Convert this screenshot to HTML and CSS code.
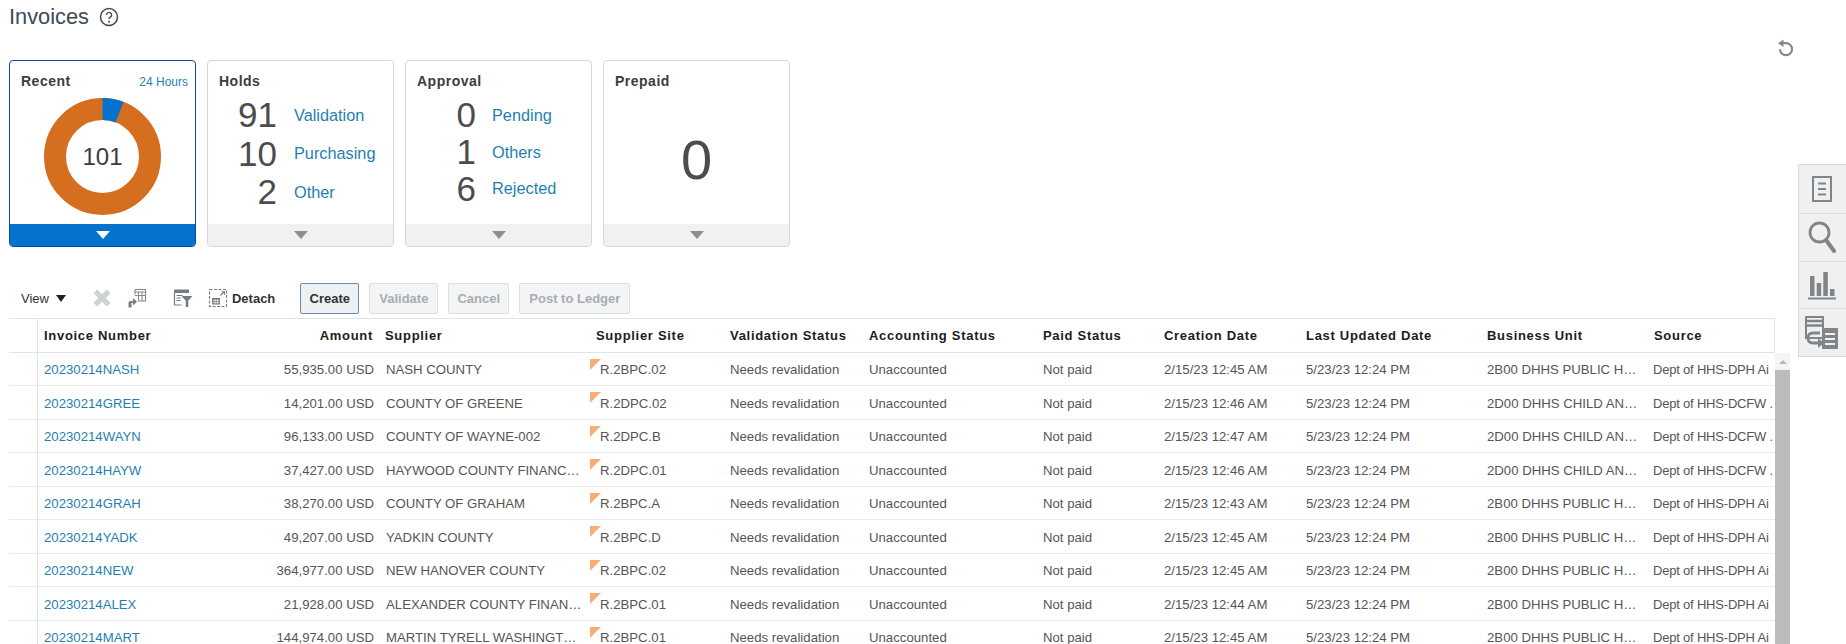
FILE: index.html
```html
<!DOCTYPE html>
<html lang="en">
<head>
<meta charset="utf-8">
<title>Invoices</title>
<link rel="stylesheet" href="styles.css">
</head>
<body>
<div class="page">
  <header class="title-row">
    <h1 class="title">Invoices</h1>
    <svg class="help" viewBox="0 0 20 20"><circle cx="10" cy="10" r="8.500" fill="none" stroke="#3f4952" stroke-width="1.500"/><path d="M7.400 8a2.600 2.600 0 1 1 4 2.200c-.9.6-1.400 1-1.400 2.100" fill="none" stroke="#3f4952" stroke-width="1.400"/><circle cx="10" cy="14.800" r="1" fill="#3f4952"/></svg>
  </header>

  <section class="cards">
    <article class="card card-active">
      <div class="card-body">
        <div class="card-head"><span class="card-title">Recent</span><a class="hours">24 Hours</a></div>
        <div class="donut">
          <svg viewBox="0 0 117 117" class="donut-svg">
            <circle cx="58.500" cy="58.500" r="47.500" fill="none" stroke="#d56e1f" stroke-width="22"/>
            <path d="M58.500 0A58.500 58.500 0 0 1 79.500 3.900L71.600 24.400A36.500 36.500 0 0 0 58.500 22Z" fill="#0572ce"/>
          </svg>
          <span class="donut-num">101</span>
        </div>
      </div>
      <div class="card-foot"><span class="caret"></span></div>
    </article>

    <article class="card">
      <div class="card-body">
        <div class="card-head"><span class="card-title">Holds</span></div>
        <div class="stats stats-holds">
          <span class="stat-num">91</span><a class="stat-link">Validation</a>
          <span class="stat-num">10</span><a class="stat-link">Purchasing</a>
          <span class="stat-num">2</span><a class="stat-link">Other</a>
        </div>
      </div>
      <div class="card-foot"><span class="caret"></span></div>
    </article>

    <article class="card">
      <div class="card-body">
        <div class="card-head"><span class="card-title">Approval</span></div>
        <div class="stats stats-approval">
          <span class="stat-num">0</span><a class="stat-link">Pending</a>
          <span class="stat-num">1</span><a class="stat-link">Others</a>
          <span class="stat-num">6</span><a class="stat-link">Rejected</a>
        </div>
      </div>
      <div class="card-foot"><span class="caret"></span></div>
    </article>

    <article class="card">
      <div class="card-body">
        <div class="card-head"><span class="card-title">Prepaid</span></div>
        <div class="big-num">0</div>
      </div>
      <div class="card-foot"><span class="caret"></span></div>
    </article>
  </section>

  <div class="toolbar">
    <span class="view">View</span><span class="view-caret"></span>
    <svg class="tool tool-x" viewBox="0 0 18 18"><path d="M3 3l12 12M15 3L3 15" stroke="#cfd2d4" stroke-width="4.800" fill="none"/></svg>
    <svg class="tool tool-freeze" viewBox="0 0 20 20"><path d="M8 1.500h10.500v11.500h-7.500M8 1.500v5M8 4h10.500M8 7.500h10.500M11.500 4v9M15 4v9" fill="none" stroke="#85898d" stroke-width="1.100"/><path d="M1.500 19.500v-4.500q0-2 2-2h2.500V10l4 3.700-4 3.700v-2.600H4.500v4.700z" fill="#777c80"/></svg>
    <svg class="tool tool-filter" viewBox="0 0 20 20"><path d="M1 1.500h15v3.500H1z" fill="#777c80"/><path d="M1.500 5v12h7" fill="none" stroke="#777c80" stroke-width="1.200"/><path d="M3.500 7.500h6M3.500 10h4.500M3.500 12.500h4" stroke="#777c80" stroke-width="1.200"/><path d="M8.500 8h11l-4.200 4.800v6.200h-2.600v-6.200z" fill="#777c80"/></svg>
    <svg class="tool tool-detach" viewBox="0 0 20 20"><path d="M1.500 1.500h17v17h-17z" fill="none" stroke="#777c80" stroke-width="1.100" stroke-dasharray="3 1.500"/><rect x="4" y="10" width="8" height="6.500" fill="#777c80"/><path d="M4.500 12.500h7M4.500 14.500h7M7 11v5M9.500 11v5" stroke="#fff" stroke-width=".6"/><path d="M12.500 7.500l3.500-3.500M13.500 3.800h3v3" fill="none" stroke="#777c80" stroke-width="1.100"/></svg>
    <span class="detach">Detach</span>
    <button class="btn btn-primary">Create</button>
    <button class="btn btn-off btn-validate">Validate</button>
    <button class="btn btn-off btn-cancel">Cancel</button>
    <button class="btn btn-off btn-post">Post to Ledger</button>
  </div>

  <div class="grid-wrap">
    <table class="grid">
      <colgroup>
        <col class="c0"><col class="c1"><col class="c2"><col class="c3"><col class="c4"><col class="c5"><col class="c6"><col class="c7"><col class="c8"><col class="c9"><col class="c10"><col class="c11">
      </colgroup>
      <thead>
        <tr>
          <th class="gutter"></th><th>Invoice Number</th><th class="num">Amount</th><th>Supplier</th><th>Supplier Site</th><th>Validation Status</th><th>Accounting Status</th><th>Paid Status</th><th>Creation Date</th><th>Last Updated Date</th><th>Business Unit</th><th>Source</th>
        </tr>
      </thead>
      <tbody>
        <tr><td class="gutter"></td><td><a>20230214NASH</a></td><td class="num">55,935.00 USD</td><td class="sup">NASH COUNTY</td><td class="site">R.2BPC.02</td><td>Needs revalidation</td><td>Unaccounted</td><td>Not paid</td><td>2/15/23 12:45 AM</td><td>5/23/23 12:24 PM</td><td>2B00 DHHS PUBLIC H…</td><td class="src">Dept of HHS-DPH Ai</td></tr>
        <tr><td class="gutter"></td><td><a>20230214GREE</a></td><td class="num">14,201.00 USD</td><td class="sup">COUNTY OF GREENE</td><td class="site">R.2DPC.02</td><td>Needs revalidation</td><td>Unaccounted</td><td>Not paid</td><td>2/15/23 12:46 AM</td><td>5/23/23 12:24 PM</td><td>2D00 DHHS CHILD AN…</td><td class="src">Dept of HHS-DCFW .</td></tr>
        <tr><td class="gutter"></td><td><a>20230214WAYN</a></td><td class="num">96,133.00 USD</td><td class="sup">COUNTY OF WAYNE-002</td><td class="site">R.2DPC.B</td><td>Needs revalidation</td><td>Unaccounted</td><td>Not paid</td><td>2/15/23 12:47 AM</td><td>5/23/23 12:24 PM</td><td>2D00 DHHS CHILD AN…</td><td class="src">Dept of HHS-DCFW .</td></tr>
        <tr><td class="gutter"></td><td><a>20230214HAYW</a></td><td class="num">37,427.00 USD</td><td class="sup">HAYWOOD COUNTY FINANC…</td><td class="site">R.2DPC.01</td><td>Needs revalidation</td><td>Unaccounted</td><td>Not paid</td><td>2/15/23 12:46 AM</td><td>5/23/23 12:24 PM</td><td>2D00 DHHS CHILD AN…</td><td class="src">Dept of HHS-DCFW .</td></tr>
        <tr><td class="gutter"></td><td><a>20230214GRAH</a></td><td class="num">38,270.00 USD</td><td class="sup">COUNTY OF GRAHAM</td><td class="site">R.2BPC.A</td><td>Needs revalidation</td><td>Unaccounted</td><td>Not paid</td><td>2/15/23 12:43 AM</td><td>5/23/23 12:24 PM</td><td>2B00 DHHS PUBLIC H…</td><td class="src">Dept of HHS-DPH Ai</td></tr>
        <tr><td class="gutter"></td><td><a>20230214YADK</a></td><td class="num">49,207.00 USD</td><td class="sup">YADKIN COUNTY</td><td class="site">R.2BPC.D</td><td>Needs revalidation</td><td>Unaccounted</td><td>Not paid</td><td>2/15/23 12:45 AM</td><td>5/23/23 12:24 PM</td><td>2B00 DHHS PUBLIC H…</td><td class="src">Dept of HHS-DPH Ai</td></tr>
        <tr><td class="gutter"></td><td><a>20230214NEW</a></td><td class="num">364,977.00 USD</td><td class="sup">NEW HANOVER COUNTY</td><td class="site">R.2BPC.02</td><td>Needs revalidation</td><td>Unaccounted</td><td>Not paid</td><td>2/15/23 12:45 AM</td><td>5/23/23 12:24 PM</td><td>2B00 DHHS PUBLIC H…</td><td class="src">Dept of HHS-DPH Ai</td></tr>
        <tr><td class="gutter"></td><td><a>20230214ALEX</a></td><td class="num">21,928.00 USD</td><td class="sup">ALEXANDER COUNTY FINAN…</td><td class="site">R.2BPC.01</td><td>Needs revalidation</td><td>Unaccounted</td><td>Not paid</td><td>2/15/23 12:44 AM</td><td>5/23/23 12:24 PM</td><td>2B00 DHHS PUBLIC H…</td><td class="src">Dept of HHS-DPH Ai</td></tr>
        <tr><td class="gutter"></td><td><a>20230214MART</a></td><td class="num">144,974.00 USD</td><td class="sup">MARTIN TYRELL WASHINGT…</td><td class="site">R.2BPC.01</td><td>Needs revalidation</td><td>Unaccounted</td><td>Not paid</td><td>2/15/23 12:45 AM</td><td>5/23/23 12:24 PM</td><td>2B00 DHHS PUBLIC H…</td><td class="src">Dept of HHS-DPH Ai</td></tr>
      </tbody>
    </table>
    <div class="scrollbar"><span class="scroll-up"></span><span class="scroll-thumb"></span></div>
  </div>
</div>

<svg class="refresh" viewBox="0 0 18 18"><path d="M6 4.200h3a6 6 0 1 1-6 6" fill="none" stroke="#85898d" stroke-width="2.200"/><path d="M1 4.200L6.500 .5v7.400z" fill="#85898d"/></svg>

<nav class="side-tabs">
  <div class="side-tab"><svg viewBox="0 0 20 26" class="side-icon"><path d="M1 1h18v24H1z" fill="none" stroke="#808589" stroke-width="2"/><path d="M6 7.500h8M6 13h8M6 18.500h8" stroke="#808589" stroke-width="2"/></svg></div>
  <div class="side-tab"><svg viewBox="0 0 28 32" class="side-icon side-search"><circle cx="11.500" cy="11.500" r="9.500" fill="none" stroke="#808589" stroke-width="2.800"/><path d="M18 19l8 11" stroke="#808589" stroke-width="4" stroke-linecap="round"/></svg></div>
  <div class="side-tab"><svg viewBox="0 0 30 30" class="side-icon side-chart"><path d="M3 6h4.500v20H3zM9.700 13h4.500v13H9.700zM16.300 2h4.500v24h-4.500zM23 19h4.500v7H23z" fill="#808589"/><path d="M1 28.500h28" stroke="#808589" stroke-width="2"/></svg></div>
  <div class="side-tab"><svg viewBox="0 0 34 34" class="side-icon side-cmp"><path d="M1 1h17v21H1z" fill="#f0f0f0" stroke="#808589" stroke-width="2"/><path d="M1 5h17M1 9.500h17" stroke="#808589" stroke-width="2.600"/><path d="M17 12h16v21H17z" fill="#808589"/><path d="M20 18h10M20 23h10M20 28h10" stroke="#f0f0f0" stroke-width="1.800"/><path d="M15 17H8q-5 0-5 5t5 5h6" fill="none" stroke="#808589" stroke-width="2.800"/><path d="M13 22l6 5-6 5z" fill="#808589"/></svg></div>
</nav>
</body>
</html>
```
FILE: styles.css
```css
* { box-sizing: border-box; }
html, body { margin: 0; padding: 0; height: 644px; overflow: hidden; background: #fff; }
body { position: relative; font-family: "Liberation Sans", Arial, sans-serif; color: #333; }
.page { padding: 0 0 0 9px; }
a { color: #1f7fb0; text-decoration: none; }

.title-row { display: flex; align-items: center; height: 34px; }
.title { margin: 0; font-size: 21.800px; font-weight: 400; color: #3d4a59; line-height: 32px; }
.help { width: 20px; height: 20px; margin-left: 10px; }

.cards { display: flex; gap: 11px; margin-top: 26px; }
.card { width: 187px; height: 187px; border: 1px solid #d6d8da; border-radius: 4px; display: flex; flex-direction: column; overflow: hidden; background: #fff; }
.card-active { border-color: #0a4aa0; }
.card-body { flex: 1; padding: 12px 7px 0 11px; position: relative; min-height: 0; }
.card-head { display: flex; justify-content: space-between; align-items: baseline; height: 20px; }
.card-title { font-size: 14px; font-weight: 700; color: #3c3c3c; letter-spacing: .5px; }
.hours { font-size: 12px; }
.card-foot { height: 22px; background: #f0f1f1; display: flex; justify-content: center; align-items: center; }
.card-active .card-foot { background: #0572ce; }
.caret { width: 0; height: 0; border-left: 7px solid transparent; border-right: 7px solid transparent; border-top: 8px solid #8d9093; }
.card-active .caret { border-top-color: #fff; }

.donut { position: absolute; left: 34px; top: 37px; width: 117px; height: 117px; }
.donut-svg { display: block; width: 117px; height: 117px; }
.donut-num { position: absolute; left: 0; right: 0; top: 44px; text-align: center; font-size: 24px; line-height: 30px; color: #3c3c3c; }

.stats { display: grid; align-items: center; color: #4a4a4a; }
.stats-holds { grid-template-columns: 50px auto; column-gap: 17px; padding-left: 8px; grid-auto-rows: 38.500px; margin-top: 3px; }
.stats-approval { grid-template-columns: 51px auto; column-gap: 16px; padding-left: 8px; grid-auto-rows: 36.700px; margin-top: 4px; }
.stat-num { font-size: 35px; line-height: 38px; text-align: right; color: #4c4c4c; }
.stat-link { font-size: 16.300px; }
.big-num { position: absolute; left: 0; right: 0; top: 67px; text-align: center; font-size: 56px; line-height: 64px; color: #4c4c4c; }

.toolbar { display: flex; align-items: center; height: 30px; margin: 36px 0 5px; font-size: 13px; }
.view { margin-left: 12px; color: #333; }
.view-caret { width: 0; height: 0; margin-left: 7px; border-left: 5px solid transparent; border-right: 5px solid transparent; border-top: 7px solid #222; }
.tool { width: 20px; height: 20px; flex: none; }
.tool-x { margin-left: 26px; }
.tool-freeze { margin-left: 15px; }
.tool-filter { margin-left: 26px; }
.tool-detach { margin-left: 15px; }
.detach { margin-left: 4px; font-weight: 700; color: #333; font-size: 13px; }
.btn { align-self: flex-start; height: 31px; padding: 0 0 1px; font: 700 13px "Liberation Sans", Arial, sans-serif; border-radius: 2px; margin-left: 10px; }
.btn-primary { width: 59px; margin-left: 25px; color: #333; background: #eef1f3; border: 1px solid #6f8ba0; }
.btn-off { color: #a9adb0; background: #f3f4f5; border: 1px solid #dcdfe1; }
.btn-validate { width: 69px; }
.btn-cancel { width: 61px; }
.btn-post { width: 111px; }

.grid-wrap { position: relative; width: 1781px; }
.grid { table-layout: fixed; width: 1766px; border-collapse: separate; border-spacing: 0; border-top: 1px solid #dfe3e6; font-size: 13.200px; }
.c0 { width: 29px; } .c1 { width: 165px; } .c2 { width: 176px; } .c3 { width: 211px; } .c4 { width: 134px; } .c5 { width: 139px; } .c6 { width: 174px; } .c7 { width: 121px; } .c8 { width: 142px; } .c9 { width: 181px; } .c10 { width: 167px; } .c11 { width: 127px; }
.grid th { height: 33.500px; padding: 0 6px; text-align: left; font-size: 13px; font-weight: 700; color: #1c1c1c; letter-spacing: .7px; border-bottom: 1px solid #dfe3e6; white-space: nowrap; overflow: hidden; }
.grid td { height: 33.500px; padding: 2px 6px 0; color: #555; white-space: nowrap; overflow: hidden; border-bottom: 1px solid #e9ecee; }
.grid th:last-child { border-right: 1px solid #dfe3e6; }
.grid .gutter { border-right: 1px solid #dfe3e6; padding: 0; }
.grid .num { text-align: right; }
.grid td.num { padding-right: 5px; }
.grid td.sup { padding-left: 7px; }
.grid td.src { padding-right: 0; padding-left: 5px; font-size: 13px; letter-spacing: -.2px; }
.grid td.site { position: relative; padding-left: 10px; }
.grid td.site::before { content: ""; position: absolute; left: 0; top: 6px; border-top: 11px solid #f7ad78; border-right: 11px solid transparent; }

.scrollbar { position: absolute; right: 0; top: 35px; width: 15px; height: 320px; background: #f4f4f4; display: flex; flex-direction: column; align-items: center; }
.scroll-up { margin-top: 7px; width: 0; height: 0; border-left: 4px solid transparent; border-right: 4px solid transparent; border-bottom: 4px solid #b5b5b5; }
.scroll-thumb { margin-top: 6px; width: 100%; flex: 1; background: #bcbcbc; }

.refresh { position: absolute; left: 1777px; top: 39px; width: 18px; height: 18px; }
.side-tabs { position: absolute; right: 0; top: 164px; width: 48px; border: 1px solid #d8d8d8; border-right: 0; background: #f0f0f0; }
.side-tab { height: 47.750px; display: flex; align-items: center; justify-content: center; padding-right: 2px; border-top: 1px solid #dcdcdc; }
.side-tab:first-child { border-top: 0; }
.side-icon { width: 20px; height: 26px; }
.side-search { width: 28px; height: 32px; }
.side-chart { width: 30px; height: 30px; }
.side-cmp { width: 34px; height: 34px; }
```
